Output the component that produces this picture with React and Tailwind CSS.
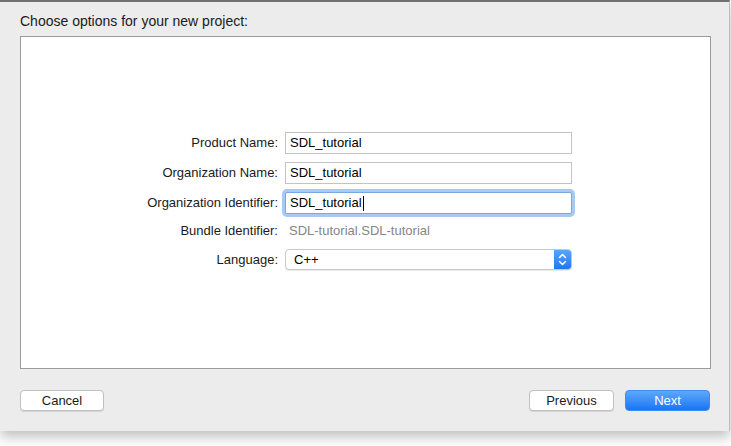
import React from 'react';

const font = { fontFamily: '"Liberation Sans", Arial, sans-serif' };

const Field = ({ label, children, className = '' }) => (
  <div className={'flex items-center ' + className}>
    <div className="w-[257px] text-right text-[13px] text-[#1a1a1a]">{label}</div>
    <div className="ml-[7px]">{children}</div>
  </div>
);

const TextBox = ({ value, focused }) => (
  <div
    className={
      focused
        ? 'w-[287px] h-[22px] flex items-center px-[4px] bg-white border border-[#7aa7e6] ring-[3px] ring-[#a9c8f2] rounded-[2px] text-[13px] text-black'
        : 'w-[287px] h-[22px] flex items-center px-[4px] bg-white border border-[#c3c3c3] text-[13px] text-black'
    }
  >
    {value}
    {focused && <span className="inline-block w-[1px] h-[15px] bg-black ml-[1px]" />}
  </div>
);

const Stepper = () => (
  <svg width="9" height="13" viewBox="0 0 9 13" fill="none" stroke="white" strokeWidth="1.5" strokeLinecap="round" strokeLinejoin="round">
    <path d="M1.5 4.5 L4.5 1.5 L7.5 4.5" />
    <path d="M1.5 8.5 L4.5 11.5 L7.5 8.5" />
  </svg>
);

export default function App() {
  return (
    <div className="w-[731px] h-[446px] bg-white overflow-hidden" style={font}>
      <div className="w-[730px] h-[431px] bg-[#ececec] border-t-2 border-r border-t-[#707070] border-r-[#bdbdbd] shadow-[0_6px_12px_rgba(0,0,0,0.25)] flex flex-col">
        <div className="pl-[20px] pt-[11px] h-[34px] text-[14px] leading-[17px] text-[#1a1a1a]">Choose options for your new project:</div>
        <div className="ml-[20px] w-[691px] h-[333px] bg-white border border-[#9b9b9b] pt-[95px]">
          <div className="flex flex-col">
            <Field label="Product Name:">
              <TextBox value="SDL_tutorial" />
            </Field>
            <Field label="Organization Name:" className="mt-[8px]">
              <TextBox value="SDL_tutorial" />
            </Field>
            <Field label="Organization Identifier:" className="mt-[8px]">
              <TextBox value="SDL_tutorial" focused />
            </Field>
            <Field label="Bundle Identifier:" className="mt-[6px]">
              <div className="h-[22px] flex items-center pl-[4px] text-[13px] text-[#858585]">SDL-tutorial.SDL-tutorial</div>
            </Field>
            <Field label="Language:" className="mt-[7px]">
              <div className="w-[287px] h-[21px] flex bg-white border border-[#c8c8c8] rounded-[4px] shadow-[0_1px_0_rgba(0,0,0,0.08)] overflow-hidden">
                <div className="flex-1 flex items-center pl-[8px] text-[13px] text-black">C++</div>
                <div className="w-[17px] flex items-center justify-center bg-gradient-to-b from-[#5aa5fb] to-[#1877f2]">
                  <Stepper />
                </div>
              </div>
            </Field>
          </div>
        </div>
        <div className="flex items-center justify-between pl-[20px] pr-[19px] pt-[21px]">
          <button className="w-[84px] h-[21px] bg-white border border-[#c0c0c0] rounded-[4px] shadow-[0_1px_0_rgba(0,0,0,0.1)] text-[13px] text-[#1a1a1a]">Cancel</button>
          <div className="flex gap-[11px]">
            <button className="w-[85px] h-[21px] bg-white border border-[#c0c0c0] rounded-[4px] shadow-[0_1px_0_rgba(0,0,0,0.1)] text-[13px] text-[#1a1a1a]">Previous</button>
            <button className="w-[85px] h-[21px] bg-gradient-to-b from-[#5da8fb] to-[#1575f5] border border-[#3d8cf5] rounded-[4px] text-[13px] text-white">Next</button>
          </div>
        </div>
      </div>
    </div>
  );
}
